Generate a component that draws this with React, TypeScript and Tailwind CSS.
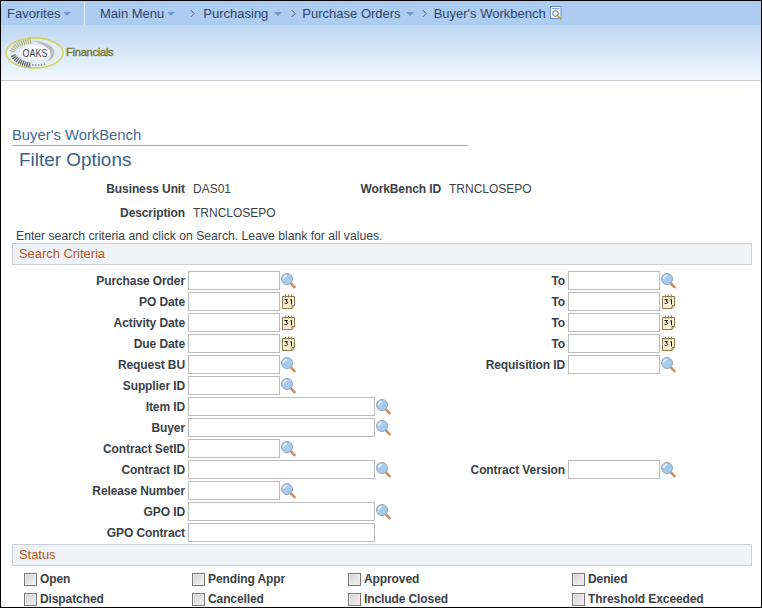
const sans = "font-['Liberation_Sans',Arial,sans-serif]";

function Caret() {
  return <span className="inline-block h-0 w-0 border-x-[4px] border-t-[4px] border-x-transparent border-t-[#6f97c9]" />;
}

function Chevron({ spacing }: { spacing: string }) {
  return (
    <svg width="5" height="9" viewBox="0 0 5 9" className={spacing}>
      <path d="M.7 1l3.4 3.5L.7 8" fill="none" stroke="#4b5b75" strokeWidth="1" />
    </svg>
  );
}

function Lookup() {
  return (
    <svg width="15" height="16" viewBox="0 0 15 16" className="shrink-0">
      <path d="M10 10.500l3.500 3.700" stroke="#cf8f62" strokeWidth="2.600" strokeLinecap="round" />
      <circle cx="6" cy="6" r="5.500" fill="#a6cbef" stroke="#93a5b6" strokeWidth="1" />
      <path d="M2.600 6a3.400 3.400 0 0 1 3.400-3.400" fill="none" stroke="#edf5fc" strokeWidth="1.500" />
    </svg>
  );
}

function Calendar() {
  return (
    <svg width="13" height="15" viewBox="0 0 13 15" className="ml-px shrink-0">
      <path d="M.5 2.500h12v9l-2.500 3H.5z" fill="#fbefd2" stroke="#8f7a4c" strokeWidth="1" />
      <path d="M10 14.500v-3h2.500" fill="#d9c48f" stroke="#8f7a4c" strokeWidth="1" />
      <path d="M3.500 .5v3M6.500 .5v3M9.500 .5v3" stroke="#8f7a4c" strokeWidth="1" />
      <path d="M2.500 5.500h3l-1.300 1.700c1 0 1.500 .5 1.500 1.200 0 1.200-2 1.500-3.200 .9M8.200 6l1.300-.6v5" fill="none" stroke="#1d1d1d" strokeWidth="1" />
    </svg>
  );
}

function Field({ w, icon }: { w: "s" | "l"; icon?: "lookup" | "cal" }) {
  return (
    <div className="flex items-center">
      <div className={`h-[19px] border border-[#bcbcbc] bg-white ${w === "s" ? "w-[92px]" : "w-[187px]"}`} />
      {icon && <span className="ml-px flex">{icon === "lookup" ? <Lookup /> : <Calendar />}</span>}
    </div>
  );
}

type Row = {
  label: string;
  w: "s" | "l";
  icon?: "lookup" | "cal";
  right?: { label: string; icon: "lookup" | "cal" };
};

const rows: Row[] = [
  { label: "Purchase Order", w: "s", icon: "lookup", right: { label: "To", icon: "lookup" } },
  { label: "PO Date", w: "s", icon: "cal", right: { label: "To", icon: "cal" } },
  { label: "Activity Date", w: "s", icon: "cal", right: { label: "To", icon: "cal" } },
  { label: "Due Date", w: "s", icon: "cal", right: { label: "To", icon: "cal" } },
  { label: "Request BU", w: "s", icon: "lookup", right: { label: "Requisition ID", icon: "lookup" } },
  { label: "Supplier ID", w: "s", icon: "lookup" },
  { label: "Item ID", w: "l", icon: "lookup" },
  { label: "Buyer", w: "l", icon: "lookup" },
  { label: "Contract SetID", w: "s", icon: "lookup" },
  { label: "Contract ID", w: "l", icon: "lookup", right: { label: "Contract Version", icon: "lookup" } },
  { label: "Release Number", w: "s", icon: "lookup" },
  { label: "GPO ID", w: "l", icon: "lookup" },
  { label: "GPO Contract", w: "l" },
];

function SectionBar({ title }: { title: string }) {
  return (
    <div className="ml-[11px] flex h-[22px] w-[740px] items-center border border-[#c9cfd5] bg-[#f0f3f5] pl-[6px] text-[12.9px] text-[#b5561f]">
      {title}
    </div>
  );
}

const statuses = [
  ["Open", "Pending Appr", "Approved", "Denied"],
  ["Dispatched", "Cancelled", "Include Closed", "Threshold Exceeded"],
];

function Check({ label, w }: { label: string; w: string }) {
  return (
    <label className={`flex items-center gap-[3px] text-[12px] font-bold tracking-[-0.1px] text-[#3a3f47] ${w}`}>
      <span className="h-[13px] w-[13px] border border-[#777] bg-gradient-to-br from-[#d0d0d0] to-[#f4f4f4] shadow-[inset_0_0_0_1px_#ececec]" />
      {label}
    </label>
  );
}

export default function App() {
  return (
    <div className={`h-[608px] w-[762px] overflow-hidden border border-black bg-white ${sans}`}>
      <div className="flex h-[24px] items-center bg-[#adcdf0] pt-[1px] text-[13px] text-[#2f4468]">
        <div className="flex h-full w-[84px] items-center border-r border-[#e4eefa] pl-[6px]">
          Favorites
          <span className="ml-[3px] flex"><Caret /></span>
        </div>
        <div className="ml-[15px] flex items-center">
          Main Menu
          <span className="ml-[3px] flex"><Caret /></span>
          <Chevron spacing="ml-[15px] mr-[8px]" />
          Purchasing
          <span className="ml-[6px] flex"><Caret /></span>
          <Chevron spacing="ml-[9px] mr-[6px]" />
          Purchase Orders
          <span className="ml-[5px] flex"><Caret /></span>
          <Chevron spacing="ml-[8px] mr-[7px]" />
          Buyer's Workbench
          <svg width="13" height="15" viewBox="0 0 13 15" className="ml-[4px]">
            <rect x="0.5" y="0.5" width="10.500" height="12" fill="#f2f6fd" stroke="#6d90cc" />
            <path d="M2 2.500h7.500" stroke="#8aa7d8" />
            <circle cx="5.500" cy="7.500" r="2.800" fill="#f4f8fd" stroke="#6b7280" />
            <path d="M7.800 9.800l3.700 3.700" stroke="#c9a81e" strokeWidth="1.800" />
          </svg>
        </div>
      </div>

      <div className="flex h-[56px] items-center border-b border-[#c8ccd2] bg-gradient-to-b from-[#bdd7f2] to-[#f3f8fe] pl-[4px]">
        <svg width="60" height="34" viewBox="0 0 60 34">
          <ellipse cx="29.500" cy="17" rx="28.500" ry="15" fill="#eef2f2" fillOpacity="0.5" stroke="#d4ce52" strokeWidth="1.300" />
          <path d="M7 16C9 10 16 6 27 5" fill="none" stroke="#b5b587" strokeWidth="5" strokeDasharray="1.300 .9" />
          <path d="M8 19c3 6 10 9 18 10" fill="none" stroke="#6f6f6f" strokeWidth="5" strokeDasharray="1.400 .7" />
          <path d="M27 29c3 .5 8 .3 13-1" fill="none" stroke="#9a9a9a" strokeWidth="2" strokeDasharray="1.500 1.500" />
          <path d="M28 5c9 0 18 3 21 9 2 5-2 10-9 13 6-4 7-9 4-13-3-4-9-7-16-9z" fill="#b9bcbc" />
          <ellipse cx="30" cy="16.500" rx="15" ry="7.500" fill="#fafbfb" />
          <text x="17.500" y="20.500" fontSize="10.500" textLength="25" lengthAdjust="spacingAndGlyphs" fill="#3c4453" fontFamily="Liberation Sans">OAKS</text>
        </svg>
        <span className="ml-[1px] text-[11.200px] tracking-[-0.3px] text-[#72701c] [-webkit-text-stroke:0.3px_#72701c]">Financials</span>
      </div>

      <div className="ml-[11px] mt-[46px] w-[456px] border-b border-[#a9a9a9] pb-[1px] text-[14.800px] leading-[17px] text-[#3f6a95]">
        Buyer's WorkBench
      </div>
      <div className="ml-[18px] mt-[3px] text-[18.900px] leading-[22px] text-[#3c5f87]">Filter Options</div>

      <div className="mt-[6px] flex h-[24px] items-center text-[12px] text-[#3a3f47]">
        <span className="w-[184px] whitespace-nowrap text-right font-bold tracking-[-0.1px]">Business Unit</span>
        <span className="ml-[8px] w-[167px]">DAS01</span>
        <span className="w-[81px] whitespace-nowrap text-right font-bold tracking-[-0.1px]">WorkBench ID</span>
        <span className="ml-[8px]">TRNCLOSEPO</span>
      </div>
      <div className="flex h-[24px] items-center text-[12px] text-[#3a3f47]">
        <span className="w-[184px] text-right font-bold tracking-[-0.1px]">Description</span>
        <span className="ml-[8px]">TRNCLOSEPO</span>
      </div>
      <div className="ml-[15px] mt-[4px] h-[14px] text-[12.200px] leading-[15px] text-[#3a3f47]">
        Enter search criteria and click on Search. Leave blank for all values.
      </div>
      <SectionBar title="Search Criteria" />

      <div className="mt-[5px] flex flex-col">
        {rows.map((row) => (
          <div key={row.label} className="flex h-[21px] items-center text-[12px] font-bold tracking-[-0.1px] text-[#3a3f47]">
            <span className="w-[184px] text-right">{row.label}</span>
            <div className="ml-[3px] w-[216px]">
              <Field w={row.w} icon={row.icon} />
            </div>
            {row.right && (
              <>
                <span className="w-[161px] text-right">{row.right.label}</span>
                <div className="ml-[3px]">
                  <Field w="s" icon={row.right.icon} />
                </div>
              </>
            )}
          </div>
        ))}
      </div>

      <div className="mt-[1px]">
        <SectionBar title="Status" />
      </div>
      <div className="mt-[6px] flex flex-col gap-[6px] pl-[23px]">
        {statuses.map((line) => (
          <div key={line[0]} className="flex h-[14px]">
            <Check label={line[0]} w="w-[168px]" />
            <Check label={line[1]} w="w-[156px]" />
            <Check label={line[2]} w="w-[224px]" />
            <Check label={line[3]} w="w-[160px]" />
          </div>
        ))}
      </div>
    </div>
  );
}
